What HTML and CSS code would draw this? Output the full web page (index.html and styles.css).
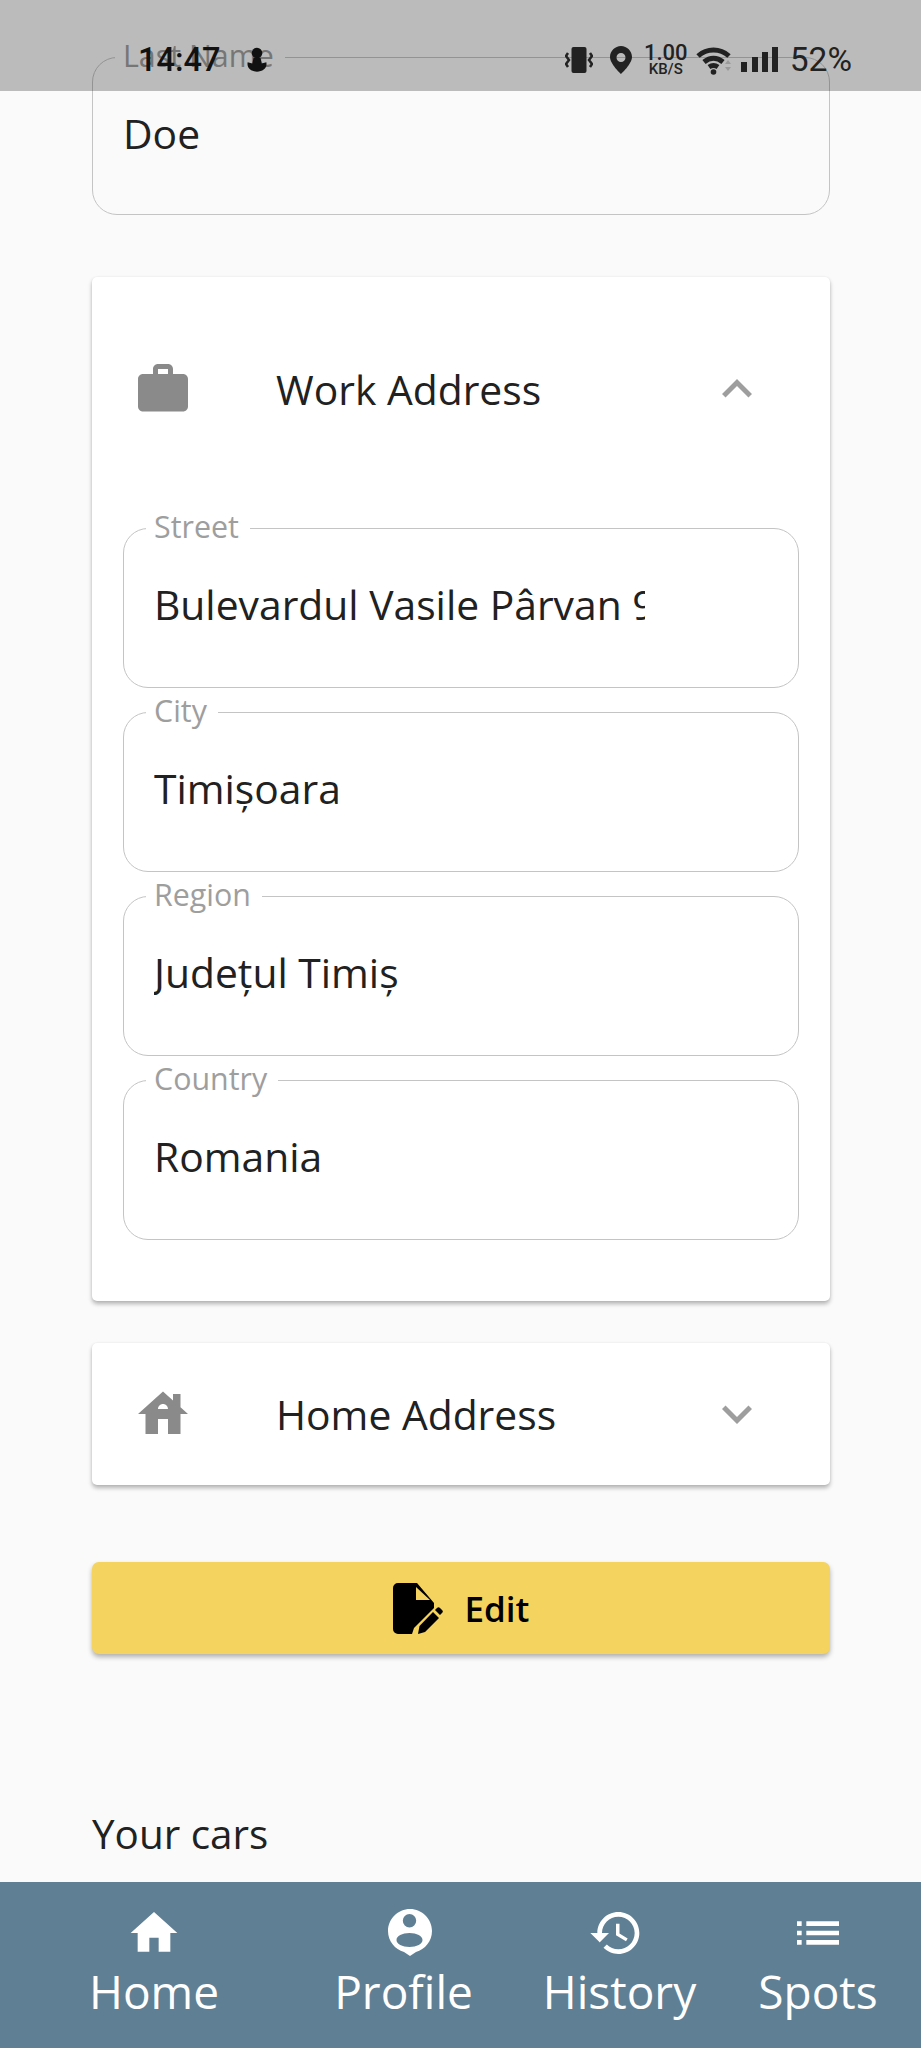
FILE: index.html
```html
<!DOCTYPE html>
<html lang="en">
<head>
<meta charset="utf-8">
<title>Profile</title>
<link rel="stylesheet" href="styles.css">
</head>
<body>
<main class="content">
  <div class="field field-standalone">
    <span class="field-label">Last Name</span>
    <div class="field-value">Doe</div>
  </div>

  <section class="card card-work">
    <header class="card-head">
      <svg class="head-icon" viewBox="0 0 24 24"><path d="M20 6h-4V4c0-1.11-.89-2-2-2h-4c-1.11 0-2 .89-2 2v2H4c-1.11 0-1.99.89-1.99 2L2 19c0 1.11.89 2 2 2h16c1.11 0 2-.89 2-2V8c0-1.11-.89-2-2-2zm-6 0h-4V4h4v2z"/></svg>
      <h2 class="card-title">Work Address</h2>
      <svg class="chevron" viewBox="0 0 24 24"><path d="M12 8l-6 6 1.41 1.41L12 10.83l4.59 4.58L18 14z"/></svg>
    </header>
    <div class="field-stack">
      <div class="field">
        <span class="field-label">Street</span>
        <div class="field-value">Bulevardul Vasile Pârvan 9</div>
      </div>
      <div class="field">
        <span class="field-label">City</span>
        <div class="field-value">Timișoara</div>
      </div>
      <div class="field">
        <span class="field-label">Region</span>
        <div class="field-value">Județul Timiș</div>
      </div>
      <div class="field">
        <span class="field-label">Country</span>
        <div class="field-value">Romania</div>
      </div>
    </div>
  </section>

  <section class="card card-home">
    <header class="card-head card-head-closed">
      <svg class="head-icon" viewBox="0 0 24 24"><path d="M19 9.3V4h-3v2.6L12 3 2 12h3v8h5v-6h4v6h5v-8h3l-3-2.7zm-9 .7c0-1.1.9-2 2-2s2 .9 2 2h-4z"/></svg>
      <h2 class="card-title">Home Address</h2>
      <svg class="chevron" viewBox="0 0 24 24"><path d="M16.59 8.59L12 13.17 7.41 8.59 6 10l6 6 6-6z"/></svg>
    </header>
  </section>

  <button class="edit-button" type="button">
    <svg class="edit-icon" viewBox="0 0 50 51"><path d="M5 0h19l17 20v5L21 45l-2 6H5a5 5 0 0 1-5-5V5a5 5 0 0 1 5-5z"/><path class="edit-fold" d="M23 4v13h14z"/><path d="M25 51l1.500-8L40 29l6 6-14 14zM42 27l2-2a2 2 0 0 1 3 0l2 2a2 2 0 0 1 0 3l-2 2z"/></svg>
    <span>Edit</span>
  </button>

  <h3 class="section-title">Your cars</h3>
</main>

<div class="status-bar">
  <div class="status-left">
    <span class="status-time">14:47</span>
    <svg class="status-glyph" viewBox="0 0 24 24"><circle cx="12" cy="6" r="4.500"/><path d="M9 10h6l1 5 4-1c1 5-3 8-8 8s-9-3-8-8l4 1z"/></svg>
  </div>
  <div class="status-right">
    <svg class="st-vibrate" viewBox="0 0 28 30"><rect x="6.500" y="2" width="15" height="26" rx="2"/><path class="st-line" d="M3 8L1 11l3 4-3 4 2 3M25 8l2 3-3 4 3 4-2 3"/></svg>
    <svg class="st-pin" viewBox="0 0 24 30"><path fill-rule="evenodd" d="M12 1C6 1 1 6 1 12c0 7 11 17 11 17s11-10 11-17C23 6 18 1 12 1zm0 7a4.500 4.500 0 1 1 0 9 4.500 4.500 0 0 1 0-9z"/></svg>
    <div class="st-speed"><span class="st-speed-num">1.00</span><span class="st-speed-unit">KB/S</span></div>
    <svg class="st-wifi" viewBox="0 0 42 30"><path class="st-arc" d="M3 11c9-8 22-8 31 0M9 17c6-5 13-5 19 0M14 22c3-2 6-2 9 0"/><circle cx="18.500" cy="27" r="2.800"/><path class="st-faint" d="M33 15l3 4h-6zM30 22h6l-3 4z"/></svg>
    <svg class="st-signal" viewBox="0 0 38 26"><rect x="0" y="15" width="6" height="10"/><rect x="11" y="10" width="6" height="15"/><rect x="21" y="5" width="6" height="20"/><rect x="31" y="0" width="6" height="25"/></svg>
    <span class="st-battery">52%</span>
  </div>
</div>

<nav class="bottom-nav">
  <a class="nav-item">
    <svg class="nav-icon" viewBox="0 0 24 24"><path d="M10 20v-6h4v6h5v-8h3L12 3 2 12h3v8z"/></svg>
    <span>Home</span>
  </a>
  <a class="nav-item">
    <svg class="nav-icon nav-icon-profile" viewBox="-6 -4 56 56"><path fill-rule="evenodd" d="M22 0C10 0 0 10 0 22c0 10 7 18.500 16 21l6 4 6-4c9-2.500 16-11 16-21C44 10 34 0 22 0zm-.5 5a6.700 6.700 0 1 1 0 13.400 6.700 6.700 0 0 1 0-13.400zm0 19c7.200 0 13 3.100 13 7s-5.800 7-13 7-13-3.100-13-7 5.800-7 13-7z"/></svg>
    <span>Profile</span>
  </a>
  <a class="nav-item">
    <svg class="nav-icon nav-icon-history" viewBox="0 0 24 24"><path d="M13 3c-4.970 0-9 4.030-9 9H1l3.890 3.890.07.140L9 12H6c0-3.870 3.130-7 7-7s7 3.130 7 7-3.130 7-7 7c-1.930 0-3.680-.79-4.940-2.060l-1.420 1.420C8.270 19.990 10.510 21 13 21c4.970 0 9-4.030 9-9s-4.030-9-9-9zm-1 5v5l4.280 2.540.72-1.210-3.500-2.080V8H12z"/></svg>
    <span>History</span>
  </a>
  <a class="nav-item">
    <svg class="nav-icon" viewBox="0 0 24 24"><path d="M3 13h2v-2H3v2zm0 4h2v-2H3v2zm0-8h2V7H3v2zm4 4h14v-2H7v2zm0 4h14v-2H7v2zM7 7v2h14V7H7z"/></svg>
    <span>Spots</span>
  </a>
</nav>
</body>
</html>
```
FILE: styles.css
```css
* { box-sizing: border-box; }

html, body {
  margin: 0;
  height: 2048px;
  overflow: hidden;
}

body {
  position: relative;
  background: #fafafa;
  color: #212121;
  font-family: "Open Sans", "Noto Sans", sans-serif;
}

.content {
  padding: 57px 91px 0 92px;
}

/* outlined fields */
.field {
  position: relative;
  height: 160px;
  border: 1px solid #c4c4c4;
  border-radius: 25px;
  padding: 0 30px;
}

.field-standalone {
  height: 158px;
}

.field-label {
  position: absolute;
  top: -20px;
  left: 22px;
  padding: 0 11px 0 8px;
  background: #fff;
  color: #9e9e9e;
  font-size: 30.4px;
  line-height: 36px;
}

.field-standalone .field-label {
  background: #fafafa;
}

.field-value {
  width: 491px;
  overflow: hidden;
  white-space: nowrap;
  font-size: 40.8px;
  line-height: 54px;
  padding-top: 48px;
}

/* cards */
.card {
  background: #fff;
  border-radius: 5px;
  box-shadow: 0 3px 4px rgba(0, 0, 0, 0.28), 0 0 2px rgba(0, 0, 0, 0.08);
}

.card-work {
  margin-top: 62px;
  height: 1024px;
  padding: 0 31px;
}

.card-home {
  margin-top: 42px;
  height: 142px;
  padding: 0 31px;
}

.card-head {
  display: flex;
  align-items: center;
  height: 224px;
  margin-bottom: 27px;
}

.card-head-closed {
  height: 142px;
  margin-bottom: 0;
}

.head-icon {
  flex: none;
  width: 60px;
  height: 60px;
  margin-left: 10px;
  fill: #8a8a8a;
}

.card-title {
  flex: 1;
  margin: 0 0 0 83px;
  font-size: 40.8px;
  font-weight: 400;
  line-height: 54px;
}

.chevron {
  flex: none;
  width: 60px;
  height: 60px;
  margin-right: 32px;
  fill: #9e9e9e;
}

.field-stack {
  display: flex;
  flex-direction: column;
  gap: 24px;
}

/* edit button */
.edit-button {
  display: flex;
  align-items: center;
  justify-content: center;
  gap: 22px;
  width: 100%;
  height: 92px;
  margin-top: 77px;
  border: 0;
  border-radius: 7px;
  background: #f4d35e;
  box-shadow: 0 3px 5px rgba(0, 0, 0, 0.3);
  color: #000;
  font-family: inherit;
  font-size: 35px;
  font-weight: 600;
}

.edit-icon {
  flex: none;
  width: 50px;
  height: 51px;
  fill: #000;
}

.edit-fold {
  fill: #f4d35e;
}

.section-title {
  margin: 153px 0 0;
  font-size: 40.4px;
  font-weight: 400;
  line-height: 54px;
}

/* status bar overlay */
.status-bar {
  position: absolute;
  top: 0;
  left: 0;
  width: 100%;
  height: 91px;
  display: flex;
  justify-content: space-between;
  align-items: center;
  padding: 28px 69px 0 138px;
  background: rgba(0, 0, 0, 0.25);
  color: #1a1a1a;
}

.status-left,
.status-right {
  display: flex;
  align-items: center;
}

.status-time {
  font-family: "Roboto", sans-serif;
  font-size: 32.5px;
  font-weight: 500;
  color: #111;
}

.status-glyph {
  width: 28px;
  height: 28px;
  margin-left: 23px;
  fill: #111;
}

.status-right svg {
  flex: none;
  fill: #222;
}

.st-vibrate { width: 28px; height: 30px; }
.st-line { fill: none !important; stroke: #222; stroke-width: 2.500; }
.st-pin { width: 24px; height: 30px; margin-left: 16px; }

.st-speed {
  display: flex;
  flex-direction: column;
  align-items: center;
  width: 42px;
  margin-left: 12px;
  font-family: "Roboto", sans-serif;
  font-weight: 500;
  color: #222;
}

.st-speed-num { font-size: 22px; line-height: 18px; }
.st-speed-unit { font-size: 15px; line-height: 14px; }

.st-wifi { width: 42px; height: 30px; margin-left: 8px; }
.st-arc { fill: none !important; stroke: #222; stroke-width: 5; }
.st-faint { fill: #9a9a9a; }

.st-signal { width: 38px; height: 26px; margin-left: 4px; }

.st-battery {
  margin-left: 11px;
  font-family: "Roboto", sans-serif;
  font-size: 33.5px;
  color: #222;
}

/* bottom navigation */
.bottom-nav {
  position: absolute;
  left: 0;
  bottom: 0;
  width: 100%;
  height: 166px;
  display: grid;
  grid-template-columns: 308px 191px 241px 156px;
  background: #5f7f94;
  color: #fff;
}

.nav-item {
  display: flex;
  flex-direction: column;
  align-items: center;
  padding-top: 23px;
  font-size: 46px;
  line-height: 60px;
}

.nav-icon {
  flex: none;
  width: 56px;
  height: 56px;
  fill: #fff;
}

.nav-icon-profile {
  margin-left: 12px;
}

.nav-icon-history {
  margin-right: 8px;
}
```
